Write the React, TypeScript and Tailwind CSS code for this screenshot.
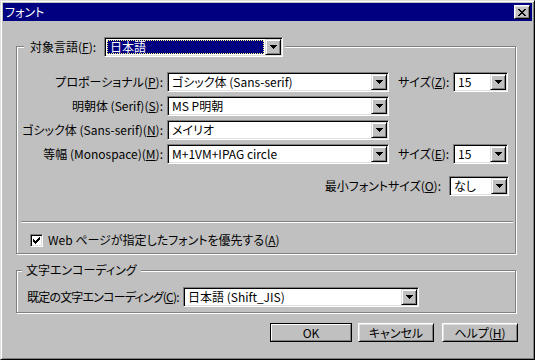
import React from "react";

const raised =
  "border border-t-white border-l-white border-r-black border-b-black shadow-[inset_1px_1px_0_#dfdfdf,inset_-1px_-1px_0_#808080]";
const sunken =
  "border border-t-[#808080] border-l-[#808080] border-r-white border-b-white shadow-[inset_1px_1px_0_#000,inset_-1px_-1px_0_#dfdfdf]";
const etched = "border border-[#808080] shadow-[inset_1px_1px_0_#fff,1px_1px_0_#fff]";

function Arrow() {
  return (
    <div className={`w-[16px] h-[16px] shrink-0 bg-[#c0c0c0] flex items-center justify-center border border-t-[#dfdfdf] border-l-[#dfdfdf] border-r-black border-b-black shadow-[inset_1px_1px_0_#fff,inset_-1px_-1px_0_#808080]`}>
      <svg width="7" height="4" viewBox="0 0 7 4" shapeRendering="crispEdges">
        <path d="M0 0h7v1H0zM1 1h5v1H1zM2 2h3v1H2zM3 3h1v1H3z" fill="#000" />
      </svg>
    </div>
  );
}

function Combo({ value, className, selected }: { value: string; className: string; selected?: boolean }) {
  return (
    <div className={`h-[20px] p-[1px] flex shrink-0 ${sunken} ${className}`}>
      {selected ? (
        <div className="flex-1 min-w-0 bg-white p-[1px] flex">
          <div className="flex-1 bg-[#000080] text-white border border-dotted border-[#ffff80] pl-[2px] leading-[12px] whitespace-nowrap">
            {value}
          </div>
        </div>
      ) : (
        <div className="flex-1 min-w-0 bg-white pl-[3px] leading-[16px] whitespace-nowrap overflow-hidden">{value}</div>
      )}
      <Arrow />
    </div>
  );
}

function Label({ text, k, rest = "):" }: { text: string; k: string; rest?: string }) {
  return (
    <>
      {text}(<u>{k}</u>{rest}
    </>
  );
}

function Button({ children, isDefault }: { children: React.ReactNode; isDefault?: boolean }) {
  if (isDefault) {
    return (
      <div className="w-[82px] h-[19px] border border-black flex">
        <div className="flex-1 border border-t-white border-l-white border-r-[#808080] border-b-[#808080] flex items-center justify-center leading-[14px]">
          {children}
        </div>
      </div>
    );
  }
  return (
    <div className={`w-[76px] h-[19px] flex items-center justify-center leading-[14px] ${raised}`}>{children}</div>
  );
}

export default function App() {
  return (
    <div className="w-[535px] h-[360px] overflow-hidden bg-[#c0c0c0] p-[2px] border border-t-[#dfdfdf] border-l-[#dfdfdf] border-r-black border-b-black shadow-[inset_1px_1px_0_#fff,inset_-1px_-1px_0_#808080] text-[12px] text-black font-['MS_UI_Gothic','Noto_Sans_CJK_JP',sans-serif] [font-feature-settings:'palt']">
      <div className="h-[18px] bg-[#000080] flex items-center justify-between pl-[2px] pr-[2px]">
        <span className="text-white leading-[16px]">フォント</span>
        <div className={`w-[16px] h-[14px] bg-[#c0c0c0] flex items-center justify-center ${raised}`}>
          <svg width="8" height="7" viewBox="0 0 8 7" shapeRendering="crispEdges">
            <path
              d="M0 0h2v1H0zM6 0h2v1H6zM1 1h2v1H1zM5 1h2v1H5zM2 2h4v1H2zM3 3h2v1H3zM2 4h4v1H2zM1 5h2v1H1zM5 5h2v1H5zM0 6h2v1H0zM6 6h2v1H6z"
              fill="#000"
            />
          </svg>
        </div>
      </div>

      <div className="px-[13px]">
        <div className={`mt-[25px] w-[500px] h-[208px] flex flex-col ${etched}`}>
          <div className="-mt-[10px] ml-[7px] w-fit bg-[#c0c0c0] pl-[6px] pr-[2px] flex items-center">
            <span className="w-[74px] leading-[16px]">
              <Label text="対象言語" k="F" />
            </span>
            <Combo value="日本語" className="w-[179px]" selected />
          </div>

          <div className="mt-[15px] flex flex-col gap-[4px]">
            <div className="flex items-center">
              <span className="w-[146px] mr-[4px] text-right whitespace-nowrap">
                <Label text="プロポーショナル" k="P" />
              </span>
              <Combo value="ゴシック体 (Sans-serif)" className="w-[222px]" />
              <span className="ml-[9px] w-[51px] mr-[4px] whitespace-nowrap">
                <Label text="サイズ" k="Z" />
              </span>
              <Combo value="15" className="w-[55px]" />
            </div>
            <div className="flex items-center">
              <span className="w-[146px] mr-[4px] text-right whitespace-nowrap">
                <Label text="明朝体 (Serif)" k="S" />
              </span>
              <Combo value="MS P明朝" className="w-[222px]" />
            </div>
            <div className="flex items-center">
              <span className="w-[146px] mr-[4px] text-right whitespace-nowrap">
                <Label text="ゴシック体 (Sans-serif)" k="N" />
              </span>
              <Combo value="メイリオ" className="w-[222px]" />
            </div>
            <div className="flex items-center">
              <span className="w-[146px] mr-[4px] text-right whitespace-nowrap">
                <Label text="等幅 (Monospace)" k="M" />
              </span>
              <Combo value="M+1VM+IPAG circle" className="w-[222px]" />
              <span className="ml-[9px] w-[51px] mr-[4px] whitespace-nowrap">
                <Label text="サイズ" k="E" />
              </span>
              <Combo value="15" className="w-[55px]" />
            </div>
          </div>

          <div className="mt-[12px] flex items-center justify-end pr-[6px]">
            <span className="mr-[8px] whitespace-nowrap">
              <Label text="最小フォントサイズ" k="O" />
            </span>
            <Combo value="なし" className="w-[60px]" />
          </div>

          <div className="mt-[25px] ml-[4px] mr-[2px] h-[2px] border-t border-t-[#808080] border-b border-b-white" />

          <div className="mt-[9px] ml-[13px] flex items-center">
            <div className={`w-[13px] h-[13px] bg-white flex items-center justify-center ${sunken}`}>
              <svg width="7" height="7" viewBox="0 0 7 7" shapeRendering="crispEdges">
                <path d="M6 0h1v1H6zM5 1h2v1H5zM0 2h1v1H0zM4 2h3v1H4zM0 3h2v1H0zM3 3h3v1H3zM0 4h5v1H0zM1 5h3v1H1zM2 6h1v1H2z" fill="#000" />
              </svg>
            </div>
            <span className="ml-[5px] leading-[16px] whitespace-nowrap">
              Web ページが指定したフォントを優先する(<u>A</u>)
            </span>
          </div>
        </div>

        <div className={`mt-[16px] w-[500px] h-[43px] flex flex-col ${etched}`}>
          <div className="-mt-[9px] ml-[5px] w-fit bg-[#c0c0c0] px-[4px] leading-[16px]">文字エンコーディング</div>
          <div className="mt-[9px] ml-[10px] flex items-center">
            <span className="w-[152px] mr-[4px] whitespace-nowrap tracking-[-0.8px]">
              <Label text="既定の文字エンコーディング" k="C" />
            </span>
            <Combo value="日本語 (Shift_JIS)" className="w-[236px]" />
          </div>
        </div>

        <div className="mt-[10px] flex justify-end gap-[6px] mr-[1px]">
          <Button isDefault>OK</Button>
          <Button>キャンセル</Button>
          <div className="ml-[2px]">
            <Button>
              ヘルプ(<u>H</u>)
            </Button>
          </div>
        </div>
      </div>
    </div>
  );
}
